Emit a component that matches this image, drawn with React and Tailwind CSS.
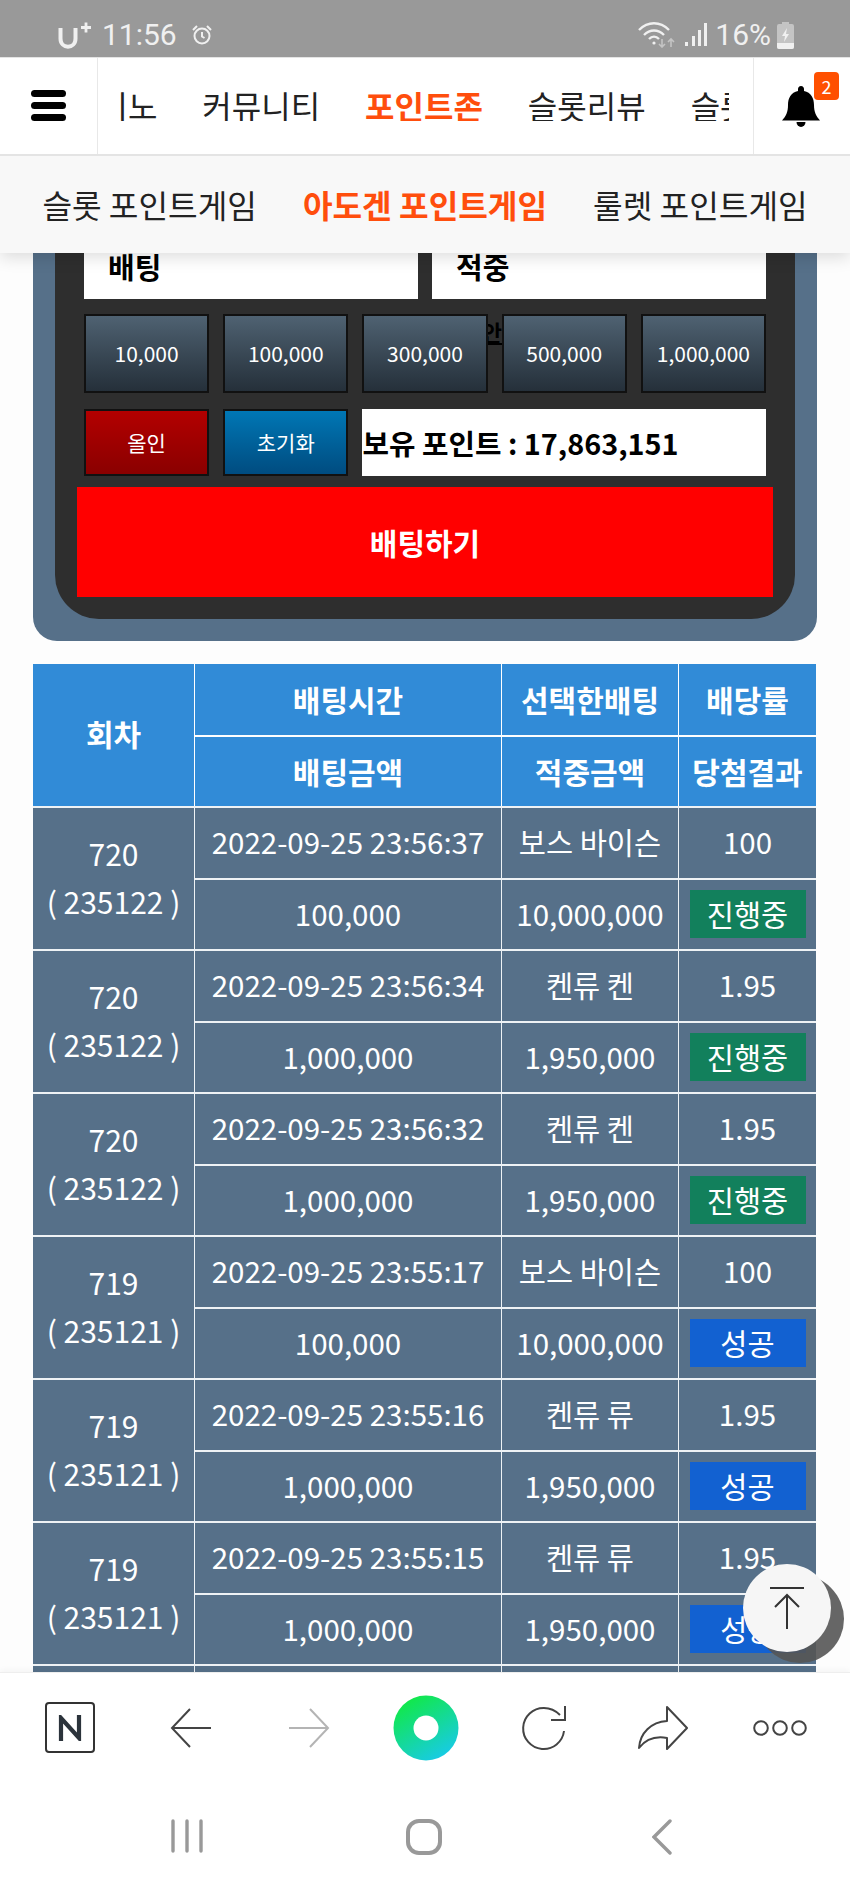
const rows = [
  { round: "720", id: "235122", time: "2022-09-25 23:56:37", pick: "보스 바이슨", odds: "100", amount: "100,000", win: "10,000,000", status: "진행중" },
  { round: "720", id: "235122", time: "2022-09-25 23:56:34", pick: "켄류 켄", odds: "1.95", amount: "1,000,000", win: "1,950,000", status: "진행중" },
  { round: "720", id: "235122", time: "2022-09-25 23:56:32", pick: "켄류 켄", odds: "1.95", amount: "1,000,000", win: "1,950,000", status: "진행중" },
  { round: "719", id: "235121", time: "2022-09-25 23:55:17", pick: "보스 바이슨", odds: "100", amount: "100,000", win: "10,000,000", status: "성공" },
  { round: "719", id: "235121", time: "2022-09-25 23:55:16", pick: "켄류 류", odds: "1.95", amount: "1,000,000", win: "1,950,000", status: "성공" },
  { round: "719", id: "235121", time: "2022-09-25 23:55:15", pick: "켄류 류", odds: "1.95", amount: "1,000,000", win: "1,950,000", status: "성공" },
];

const chips = ["10,000", "100,000", "300,000", "500,000", "1,000,000"];

function StatusBar() {
  return (
    <div className="h-[57px] shrink-0 bg-[#999999] flex items-center justify-between pl-[58px] pr-[56px] pt-[13px] text-[#f0f0f0] font-['Roboto',sans-serif]">
      <div className="flex items-center">
        <svg width="34" height="28" viewBox="0 0 34 28" fill="none" stroke="#f0f0f0">
          <path d="M2.5 7v10.5c0 11 15 11 15 0V7" strokeWidth="4" />
          <path d="M23 6.5h10M28 1.5v10" strokeWidth="2.8" />
        </svg>
        <span className="text-[30px] leading-none ml-[10px]">11:56</span>
        <svg className="ml-[14px]" width="22" height="22" viewBox="0 0 22 22" fill="none" stroke="#f0f0f0" strokeWidth="2">
          <circle cx="11" cy="12" r="7.5" />
          <path d="M11 8v4.5l2.5 1.5M2 6l4-4M20 6l-4-4" />
        </svg>
      </div>
      <div className="flex items-center">
        <svg width="40" height="26" viewBox="0 0 40 26" fill="none" stroke="#f0f0f0" strokeWidth="2.4">
          <path d="M1 8c9-9 21-9 30 0M6 13c6-6 14-6 20 0M11 17c3-3 7-3 10 0" />
          <circle cx="16" cy="21" r="1.6" fill="#f0f0f0" stroke="none" />
          <path d="M24 17v8M21 22l3 3 3-3M33 25v-8M30 20l3-3 3 3" stroke="#c4c4c4" strokeWidth="1.6" />
        </svg>
        <svg className="ml-[6px]" width="24" height="26" viewBox="0 0 24 26" fill="#f0f0f0">
          <rect x="1" y="20" width="3" height="4" />
          <rect x="8" y="14" width="3" height="10" />
          <rect x="14" y="8" width="3" height="16" />
          <rect x="20" y="1" width="3" height="23" />
        </svg>
        <span className="text-[30px] leading-none ml-[7px]">16%</span>
        <svg className="ml-[6px]" width="17" height="28" viewBox="0 0 17 28">
          <path d="M5 1h7v2h3a2 2 0 0 1 2 2v21a2 2 0 0 1-2 2H2a2 2 0 0 1-2-2V5a2 2 0 0 1 2-2h3z" fill="#c4c4c4" />
          <path d="M0 22h17v4a2 2 0 0 1-2 2H2a2 2 0 0 1-2-2z" fill="#f0f0f0" />
          <path d="M10 7l-5 8h3l-1 6 5-8H9z" fill="#f0f0f0" />
        </svg>
      </div>
    </div>
  );
}

function Header() {
  return (
    <div className="h-[99px] shrink-0 bg-white flex border-t border-b-2 border-[#e4e4e4] relative z-20">
      <div className="w-[98px] shrink-0 border-r border-[#e8e8e8] flex flex-col items-center justify-center gap-[5px] pb-[2px]">
        <span className="w-[35px] h-[7px] bg-black rounded-sm" />
        <span className="w-[35px] h-[7px] bg-black rounded-sm" />
        <span className="w-[35px] h-[7px] bg-black rounded-sm" />
      </div>
      <div className="flex-1 flex items-center pb-[3px]">
        <div className="ml-[21px] w-[610px] overflow-hidden flex items-center gap-[45px] text-[32px] leading-none text-[#222] whitespace-nowrap">
          <span className="ml-[-50px]">카지노</span>
          <span>커뮤니티</span>
          <span className="text-[#ff4e0d] font-bold">포인트존</span>
          <span>슬롯리뷰</span>
          <span>슬롯정보</span>
        </div>
      </div>
      <div className="w-[97px] shrink-0 border-l border-[#e8e8e8] relative flex items-start justify-center">
        <svg width="38" height="42" viewBox="0 0 38 42" fill="black" className="mt-[28px] ml-[-3px]">
          <path d="M19 0c-2 0-3 1.5-3 3v2C9 6.5 6 12 6 19c0 7-2 11-6 15.5h38C34 30 32 26 32 19c0-7-3-12.5-10-14V3c0-1.5-1-3-3-3z" />
          <path d="M14.5 36h9a4.5 5 0 0 1-9 0z" />
        </svg>
        <span className="absolute left-[60px] top-[14px] w-[25px] h-[28px] rounded-[4px] bg-[#ff5000] text-white text-[18px] leading-[28px] text-center">2</span>
      </div>
    </div>
  );
}

function SubNav() {
  return (
    <div className="h-[97px] shrink-0 bg-[#f8f8f8] flex items-center justify-center gap-[46px] text-[32.2px] leading-none text-[#222] relative z-10 shadow-[0_4px_16px_rgba(0,0,0,0.14)]">
      <span>슬롯 포인트게임</span>
      <span className="text-[#ff4e0d] font-bold">아도겐 포인트게임</span>
      <span>룰렛 포인트게임</span>
    </div>
  );
}

function BetPanel() {
  return (
    <div className="mx-[33px] bg-[#567089] rounded-b-[24px] px-[22px] pb-[22px]">
      <div className="bg-[#2e2e2e] rounded-b-[44px] px-[22px] pb-[22px] h-[366px] flex flex-col">
        <div className="flex gap-[14px] h-[46px] shrink-0 px-[7px]">
          <div className="flex-1 bg-white pl-[24px] text-[29px] leading-[26px] font-bold text-black">배팅</div>
          <div className="flex-1 bg-white pl-[24px] text-[29px] leading-[26px] font-bold text-black">적중</div>
        </div>
        <div className="relative grid grid-cols-5 gap-[14px] mt-[15px] px-[7px] h-[79px] shrink-0">
          <span className="absolute left-[410px] top-[3px] w-[15px] overflow-hidden flex justify-end text-[22px] leading-[28px] font-bold text-black underline">
            <span className="shrink-0">안</span>
          </span>
          {chips.map((c) => (
            <button key={c} className="relative border-2 border-[#111] bg-gradient-to-b from-[#4f6272] to-[#25303a] text-white text-[21px]">
              {c}
            </button>
          ))}
        </div>
        <div className="grid grid-cols-5 gap-[14px] mt-[16px] px-[7px] h-[67px] shrink-0">
          <button className="border-2 border-[#111] bg-gradient-to-b from-[#b30000] to-[#8a0000] text-white text-[21px]">올인</button>
          <button className="border-2 border-[#111] bg-gradient-to-b from-[#0077b5] to-[#004c80] text-white text-[21px]">초기화</button>
          <div className="col-span-3 bg-white flex items-center text-[28.8px] font-bold text-black whitespace-nowrap">
            보유 포인트 : 17,863,151
          </div>
        </div>
        <button className="mt-[11px] h-[110px] shrink-0 bg-[#ff0000] text-white text-[30px] font-bold">배팅하기</button>
      </div>
    </div>
  );
}

function ResultTable() {
  const headCell = "border-t-2 border-l border-white font-bold";
  const cell = "border-t-2 border-l border-[#eef2f5] font-normal";
  const textCell = cell + " pb-[3px]";
  return (
    <table className="mt-[23px] ml-[33px] w-[783px] table-fixed border-separate border-spacing-0 text-center text-white text-[29.5px]">
      <colgroup>
        <col className="w-[161px]" />
        <col className="w-[307px]" />
        <col className="w-[177px]" />
        <col className="w-[138px]" />
      </colgroup>
      <thead className="bg-[#318bd7] text-[30px]">
        <tr className="h-[71px]">
          <th rowSpan={2} className="font-bold pb-[3px]">회차</th>
          <th className="border-l border-white font-bold">배팅시간</th>
          <th className="border-l border-white font-bold">선택한배팅</th>
          <th className="border-l border-white font-bold">배당률</th>
        </tr>
        <tr className="h-[71px]">
          <th className={headCell}>배팅금액</th>
          <th className={headCell}>적중금액</th>
          <th className={headCell}>당첨결과</th>
        </tr>
      </thead>
      <tbody className="bg-[#567089]">
        {rows.map((r) => (
          <>
            <tr key={r.time} className="h-[71.5px]">
              <td rowSpan={2} className="border-t-2 border-[#eef2f5] leading-[48px] text-[30px] pb-[4px]">
                {r.round}
                <br />( {r.id} )
              </td>
              <td className={textCell}>{r.time}</td>
              <td className={textCell}>{r.pick}</td>
              <td className={textCell}>{r.odds}</td>
            </tr>
            <tr key={r.time + "b"} className="h-[71.5px]">
              <td className={textCell}>{r.amount}</td>
              <td className={textCell}>{r.win}</td>
              <td className={cell}>
                <div className={r.status === "성공" ? "mx-auto w-[116px] h-[48px] leading-[46px] bg-[#1261d1]" : "mx-auto w-[116px] h-[48px] leading-[46px] bg-[#12805c]"}>
                  {r.status}
                </div>
              </td>
            </tr>
          </>
        ))}
        <tr className="h-[71px]">
          <td className="border-t-2 border-[#eef2f5]" />
          <td className={cell} />
          <td className={cell} />
          <td className={cell} />
        </tr>
      </tbody>
    </table>
  );
}

function Toolbar() {
  return (
    <div className="h-[110px] shrink-0 bg-white relative z-10 flex items-center pl-[45px] border-t border-[#eeeeee] shadow-[0_-2px_6px_rgba(0,0,0,0.04)]">
      <div className="w-[50px] h-[51px] rounded-[4px] border-2 border-[#333] flex items-center justify-center">
        <svg width="24" height="26" viewBox="0 0 24 26" fill="none" stroke="#2b333b" strokeWidth="4.2">
          <path d="M3 26V3l18 20V0" />
        </svg>
      </div>
      <svg width="42" height="40" viewBox="0 0 42 40" fill="none" stroke="#444" strokeWidth="2" className="ml-[75px]">
        <path d="M20 1L2 20l18 19M2 20h39" />
      </svg>
      <svg width="42" height="40" viewBox="0 0 42 40" fill="none" stroke="#b4b4b4" strokeWidth="2" className="ml-[76px]">
        <path d="M22 1l18 19-18 19M40 20H1" />
      </svg>
      <svg width="66" height="66" viewBox="0 0 66 66" className="ml-[63px]">
        <defs>
          <linearGradient id="naver" x1="0.2" y1="0" x2="0.8" y2="1">
            <stop offset="0" stopColor="#11ea3f" />
            <stop offset="1" stopColor="#18c9ef" />
          </linearGradient>
        </defs>
        <circle cx="33" cy="33" r="32.5" fill="url(#naver)" />
        <circle cx="33" cy="33" r="12.5" fill="white" />
      </svg>
      <svg width="46" height="46" viewBox="0 0 46 46" fill="none" stroke="#444" strokeWidth="2" className="ml-[62px]">
        <path d="M43 26A20.5 20.5 0 1 1 23 3c6 0 11 2 16 7" />
        <path d="M44 1v14H30" />
      </svg>
      <svg width="50" height="44" viewBox="0 0 50 44" fill="none" stroke="#444" strokeWidth="2" strokeLinejoin="round" className="ml-[71px]">
        <path d="M29 1l20 21-20 21V32C18 30 8 33 1 42c1-15 12-26 28-27z" />
      </svg>
      <svg width="54" height="16" viewBox="0 0 54 16" fill="none" stroke="#444" strokeWidth="2" className="ml-[65px]">
        <circle cx="8" cy="8" r="6.8" />
        <circle cx="27" cy="8" r="6.8" />
        <circle cx="46" cy="8" r="6.8" />
      </svg>
    </div>
  );
}

function NavBar() {
  return (
    <div className="h-[107px] shrink-0 bg-white relative z-10 flex items-start pt-[37px] pl-[171px]">
      <svg width="32" height="34" viewBox="0 0 32 34" fill="none" stroke="#999" strokeWidth="3.4" strokeLinecap="round">
        <path d="M2 2v30M16 2v30M30 2v30" />
      </svg>
      <svg width="36" height="36" viewBox="0 0 36 36" fill="none" stroke="#999" strokeWidth="4" className="ml-[203px]">
        <rect x="2" y="2" width="32" height="32" rx="11" />
      </svg>
      <svg width="20" height="36" viewBox="0 0 20 36" fill="none" stroke="#999" strokeWidth="3.4" strokeLinecap="round" className="ml-[210px]">
        <path d="M18 2L2 18l16 16" />
      </svg>
    </div>
  );
}

function TopButton() {
  return (
    <div className="absolute left-[743px] top-[1564px] z-30 w-[88px] h-[88px]">
      <div className="absolute left-[13px] top-[11px] w-[88px] h-[88px] rounded-full bg-[#555]/90" />
      <div className="absolute inset-0 rounded-full bg-[#f6f6f6] flex items-center justify-center">
        <svg width="36" height="42" viewBox="0 0 36 42" fill="none" stroke="#333" strokeWidth="2">
          <path d="M1 1h34M18 42V8M6 20L18 8l12 12" />
        </svg>
      </div>
    </div>
  );
}

export default function App() {
  return (
    <div className="relative w-[850px] h-[1889px] overflow-hidden flex flex-col bg-white font-['Noto_Sans_CJK_KR','Noto_Sans',sans-serif]">
      <StatusBar />
      <Header />
      <SubNav />
      <div className="flex-1 overflow-hidden bg-[#fdfdfd]">
        <BetPanel />
        <ResultTable />
      </div>
      <Toolbar />
      <NavBar />
      <TopButton />
    </div>
  );
}
